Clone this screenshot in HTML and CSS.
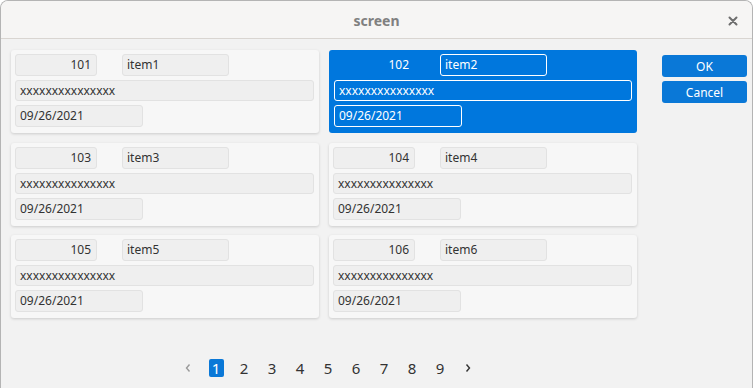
FILE: index.html
```html
<!DOCTYPE html>
<html>
<head>
<meta charset="utf-8">
<link rel="stylesheet" href="styles.css">
</head>
<body>
<div class="window">
  <div class="titlebar">
    <span class="title">screen</span>
    <svg class="close" width="10" height="10" viewBox="0 0 10 10"><path d="M1.5 1.5 L8.5 8.5 M8.5 1.5 L1.5 8.5" stroke="#6e6e6e" stroke-width="2" stroke-linecap="round"/></svg>
  </div>
  <div class="content">
    <div class="main">
      <div class="grid">
        <div class="card">
          <div class="row1"><div class="field num">101</div><div class="field name">item1</div></div>
          <div class="field wide">xxxxxxxxxxxxxxx</div>
          <div class="field date">09/26/2021</div>
        </div>
        <div class="card selected">
          <div class="row1"><div class="field num">102</div><div class="field name">item2</div></div>
          <div class="field wide">xxxxxxxxxxxxxxx</div>
          <div class="field date">09/26/2021</div>
        </div>
        <div class="card">
          <div class="row1"><div class="field num">103</div><div class="field name">item3</div></div>
          <div class="field wide">xxxxxxxxxxxxxxx</div>
          <div class="field date">09/26/2021</div>
        </div>
        <div class="card">
          <div class="row1"><div class="field num">104</div><div class="field name">item4</div></div>
          <div class="field wide">xxxxxxxxxxxxxxx</div>
          <div class="field date">09/26/2021</div>
        </div>
        <div class="card">
          <div class="row1"><div class="field num">105</div><div class="field name">item5</div></div>
          <div class="field wide">xxxxxxxxxxxxxxx</div>
          <div class="field date">09/26/2021</div>
        </div>
        <div class="card">
          <div class="row1"><div class="field num">106</div><div class="field name">item6</div></div>
          <div class="field wide">xxxxxxxxxxxxxxx</div>
          <div class="field date">09/26/2021</div>
        </div>
      </div>
      <div class="pager">
        <span class="pg arrow prev"><svg width="8" height="10" viewBox="0 0 8 10"><path d="M5.5 1.5 L2.5 5 L5.5 8.5" fill="none" stroke="#9a9a9a" stroke-width="1.4"/></svg></span>
        <span class="pg"><span class="cur">1</span></span>
        <span class="pg">2</span>
        <span class="pg">3</span>
        <span class="pg">4</span>
        <span class="pg">5</span>
        <span class="pg">6</span>
        <span class="pg">7</span>
        <span class="pg">8</span>
        <span class="pg">9</span>
        <span class="pg arrow"><svg width="8" height="10" viewBox="0 0 8 10"><path d="M2.5 1.5 L5.5 5 L2.5 8.5" fill="none" stroke="#333" stroke-width="1.4"/></svg></span>
      </div>
    </div>
    <div class="actions">
      <button class="btn">OK</button>
      <button class="btn">Cancel</button>
    </div>
  </div>
</div>
</body>
</html>
```
FILE: styles.css
```css
* { box-sizing: border-box; }
html, body { margin: 0; padding: 0; }
body {
  width: 753px;
  height: 388px;
  overflow: hidden;
  background: #ffffff;
  font-family: "Noto Sans", "Open Sans", sans-serif;
}
.window {
  width: 753px;
  height: 388px;
  border: 1px solid #b4b4b4;
  border-bottom: none;
  border-radius: 8px 8px 0 0;
  background: #f2f2f2;
  overflow: hidden;
  display: flex;
  flex-direction: column;
}
.titlebar {
  height: 38px;
  flex: none;
  background: #f6f5f4;
  border-bottom: 1px solid #d9d5d1;
  display: flex;
  align-items: center;
  justify-content: center;
  position: relative;
}
.title {
  font-family: "Noto Sans", sans-serif;
  font-size: 14px;
  font-weight: 700;
  color: #808080;
  margin-top: 1px;
}
.close {
  position: absolute;
  right: 14px;
  top: 15px;
}
.content {
  display: flex;
  padding: 11px 0 0 10px;
  flex: 1;
}
.main {
  width: 626px;
  display: flex;
  flex-direction: column;
}
.grid {
  display: grid;
  grid-template-columns: 308px 308px;
  grid-auto-rows: 83px;
  column-gap: 10px;
  row-gap: 9.5px;
}
.card {
  background: #f7f7f7;
  border-radius: 3px;
  box-shadow: 0 1px 3px rgba(0,0,0,0.16);
  padding: 4px 5px 5px 4px;
  display: flex;
  flex-direction: column;
  gap: 4px;
}
.row1 {
  display: flex;
  gap: 25px;
}
.field {
  height: 22px;
  border: 1px solid #e2e2e2;
  border-radius: 3px;
  background: #efefef;
  font-size: 12px;
  color: #333;
  line-height: 20px;
  padding: 0 4px;
  white-space: nowrap;
}
.field.num { width: 82px; text-align: right; padding-right: 5px; }
.field.name { width: 107px; }
.field.wide { width: 299px; height: 21px; line-height: 19px; }
.field.date { width: 128px; }

.card.selected {
  background: #0077dd;
  box-shadow: none;
}
.card.selected .field {
  background: transparent;
  border-color: #ffffff;
  color: #ffffff;
}
.card.selected .field.wide,
.card.selected .field.date { margin-left: 1px; }
.card.selected .field.wide { width: 298px; }
.card.selected .field.num { border-color: transparent; }

.pager {
  display: flex;
  justify-content: center;
  margin-top: 40px;
  padding-left: 8px;
  align-items: center;
}
.pg {
  width: 28px;
  height: 20px;
  display: flex;
  align-items: center;
  justify-content: center;
  font-size: 15px;
  color: #333;
}
.cur {
  display: inline-block;
  width: 15px;
  height: 18px;
  line-height: 18px;
  text-align: center;
  background: #0a78d7;
  color: #fff;
  border-radius: 2px;
}
.actions {
  margin-left: 25px;
  padding-top: 5px;
  display: flex;
  flex-direction: column;
  gap: 4px;
}
.btn {
  width: 85px;
  height: 22px;
  border: none;
  border-radius: 3px;
  background: #0a78d7;
  color: #fff;
  font-family: "Noto Sans", sans-serif;
  font-size: 12px;
  padding: 0;
}
```
